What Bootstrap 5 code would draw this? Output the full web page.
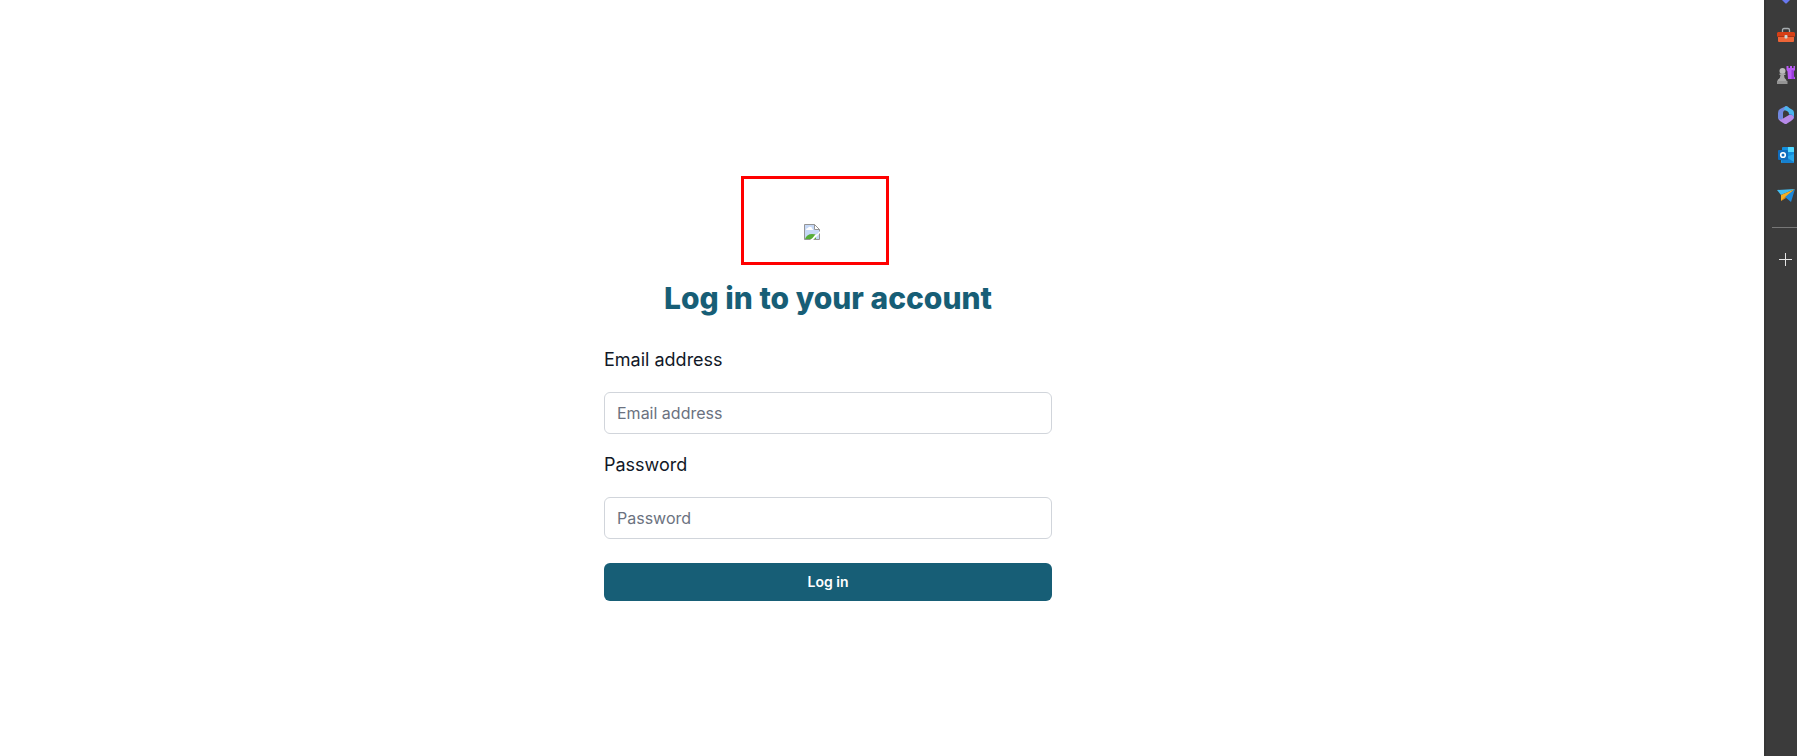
<!DOCTYPE html>
<html lang="en">
<head>
<meta charset="utf-8">
<meta name="viewport" content="width=device-width, initial-scale=1">
<title>Log in</title>
<link href="https://cdn.jsdelivr.net/npm/bootstrap@5.3.0/dist/css/bootstrap.min.css" rel="stylesheet">
<style>
  body { font-family: Inter, "Liberation Sans", sans-serif; background: #fff; color: #111827; }
  .login-area { padding: 20px 108px 0 0; min-width: 0; }
  .login-panel { width: 100%; max-width: 448px; }
  .logo-frame { width: 148px; height: 89px; border: 3px solid #f00; margin-right: 26px; padding: 45px 0 0 60px; }
  .login-title { color: #175e76; font-size: 30px; line-height: 36px; font-weight: 800; margin: 15px 0 30px; }
  .field-label { font-size: 18px; line-height: 28px; margin-bottom: 18px; }
  .field-input { height: 42px; font-size: 16px; line-height: 24px; padding: 8px 12px; border-color: #d1d5db; border-radius: 6px; }
  .field-input::placeholder { color: #6b7280; }
  .field-group { margin-bottom: 17px; }
  .login-btn { background: #175e76; color: #fff; height: 38px; border: 0; border-radius: 6px; font-size: 14px; line-height: 20px; font-weight: 600; margin-top: 24px; }
  .login-btn:hover { background: #124b5e; color: #fff; }
  .side-rail { width: 33px; background: #3b3b3b; border-left: 2px solid #363636; }
  .rail-list { width: 40px; margin-top: -25px; }
  .rail-btn { height: 40px; width: 40px; background: none; border: 0; }
  .rail-line { border-top: 1px solid #777; margin: 12px 0 12px 6px; }
</style>
</head>
<body>
<div class="d-flex min-vh-100">
  <main class="login-area flex-grow-1 d-flex align-items-center justify-content-center">
    <div class="login-panel d-flex flex-column align-items-center">
      <div class="logo-frame">
        <svg class="d-block" width="16" height="16" viewBox="0 0 16 16" role="img" aria-label="Logo">
          <path d="M.5.5h10l5 5v10H.5z" fill="#c6d8f6"/>
          <path d="M2 6q0-2 2-2 1-2 3-1 1 0 1 1.500 1 0 1 1.500z" fill="#fff"/>
          <path d="M1 15q2-5 7-5 3 0 4 1v4z" fill="#56ad38"/>
          <path d="M.5 15.500V.5h10l5 5v10z" fill="none" stroke="#959595"/>
          <path d="M10.500.5v5h5z" fill="#fff" stroke="#959595"/>
          <path d="M16 7v2l-7 7H6q3-2 5-5 3-1 5-4z" fill="#fff"/>
        </svg>
      </div>
      <h1 class="login-title text-center">Log in to your account</h1>
      <form class="w-100" onsubmit="return false">
        <div class="field-group">
          <label class="field-label d-block" for="email">Email address</label>
          <input class="form-control field-input" id="email" type="email" placeholder="Email address">
        </div>
        <div>
          <label class="field-label d-block" for="password">Password</label>
          <input class="form-control field-input" id="password" type="password" placeholder="Password">
        </div>
        <button class="btn login-btn w-100 d-flex align-items-center justify-content-center" type="submit">Log in</button>
      </form>
    </div>
  </main>
  <aside class="side-rail flex-shrink-0 overflow-hidden" aria-label="Browser tools">
    <div class="rail-list d-flex flex-column">
      <button class="rail-btn d-flex align-items-center justify-content-center p-0" type="button" aria-label="Shopping">
        <svg width="18" height="18" viewBox="0 0 18 18"><path d="M1 3h8l8 7-7 7q-1 1-2 0L1 10z" fill="#6878f0"/></svg>
      </button>
      <button class="rail-btn d-flex align-items-center justify-content-center p-0" type="button" aria-label="Tools">
        <svg width="18" height="18" viewBox="0 0 18 18">
          <path d="M5.500 6V4q0-1.500 1.500-1.500h4q1.500 0 1.500 1.500v2" fill="none" stroke="#a7adb0" stroke-width="1.300"/>
          <path d="M1 10h16v5q0 1-1 1H2q-1 0-1-1z" fill="#ee6537"/>
          <path d="M1 6h16l1 1v3H0V7z" fill="#d63f16"/>
          <path d="M0 10h18v1H0z" fill="#a93416"/>
          <rect x="7.500" y="9" width="3" height="3.500" rx="1" fill="#c9d8d8"/>
        </svg>
      </button>
      <button class="rail-btn d-flex align-items-center justify-content-center p-0" type="button" aria-label="Games">
        <svg width="18" height="18" viewBox="0 0 18 18">
          <path d="M9.500 0h2v2h1.500V0h2v2h1.500V0H18v4l-1.500 1.500.5 5 1 1V13h-7l-.5-7.500-1-1.500z" fill="#b95af5"/>
          <path d="M14.500 4h2l.5 9h-2.500z" fill="#9a38dc"/>
          <circle cx="5.500" cy="5" r="3" fill="#bcbcbc"/>
          <path d="M2.500 7.500h6V9H7q0 3 2 4.500 1 1 1 4.500H0q0-3.500 1-4.500Q3.500 12 3.500 9h-1z" fill="#a8a8a8"/>
          <path d="M0 15h10.500v3H0z" fill="#949494"/>
        </svg>
      </button>
      <button class="rail-btn d-flex align-items-center justify-content-center p-0" type="button" aria-label="Microsoft 365">
        <svg width="18" height="18" viewBox="0 0 18 18">
          <path d="M9 0 3 3Q1 4 1 7v5q0 2 2 2 2 0 3-1V7q0-2 2-3l4-2q-1-2-3-2z" fill="#7188df"/>
          <path d="m9 0 5 3q3 1 3 4v4q-1 2-3 1l-2-1V8q0-2-2-3L7 4q0-3 2-4z" fill="#4bb5ed"/>
          <path d="M12 8q3 0 5 3v1q-1 2-3 1l-2-2z" fill="#285fc5"/>
          <path d="M2 13q2 1 4-.5l6-3.500q3-1 5 2 0 2-3 4l-4 2.500q-1 1-3 0L3 15q-1-1-1-2z" fill="#b78ae9"/>
        </svg>
      </button>
      <button class="rail-btn d-flex align-items-center justify-content-center p-0" type="button" aria-label="Outlook">
        <svg width="16" height="16" viewBox="0 0 16 16">
          <rect x="4" width="12" height="11" rx="1" fill="#1490df"/>
          <path d="M10 0h5q1 0 1 1v4h-6z" fill="#50d9ff"/>
          <path d="M4 5h6v5H4z" fill="#0364b8"/>
          <path d="m3 12 13-5v8q0 1-1 1H4q-1 0-1-1z" fill="#28a8ea"/>
          <path d="m8 10 8 5q0 1-1 1H4l-1-4z" fill="#1680cf"/>
          <rect y="3" width="10" height="10" rx="1" fill="#0f6cbd"/>
          <circle cx="5" cy="8" r="2.300" fill="none" stroke="#fff" stroke-width="1.600"/>
        </svg>
      </button>
      <button class="rail-btn d-flex align-items-center justify-content-center p-0" type="button" aria-label="Drop">
        <svg width="18" height="18" viewBox="0 0 18 18">
          <path d="M0 4 18 3 4 9z" fill="#42bdf2"/>
          <path d="M18 3 4 9v6l4-3z" fill="#f5ae22"/>
          <path d="M18 3 8 11l6 5z" fill="#2088d8"/>
          <path d="m4 15 4-4 1 1z" fill="#d47c10"/>
        </svg>
      </button>
      <div class="rail-line"></div>
      <button class="rail-btn d-flex align-items-center justify-content-center p-0" type="button" aria-label="Add">
        <svg width="14" height="14" viewBox="0 0 14 14"><path d="M6.500 0v13M0 6.500h13" stroke="#e4e4e4" fill="none"/></svg>
      </button>
    </div>
  </aside>
</div>
<script src="https://cdn.jsdelivr.net/npm/bootstrap@5.3.0/dist/js/bootstrap.bundle.min.js"></script>
</body>
</html>
